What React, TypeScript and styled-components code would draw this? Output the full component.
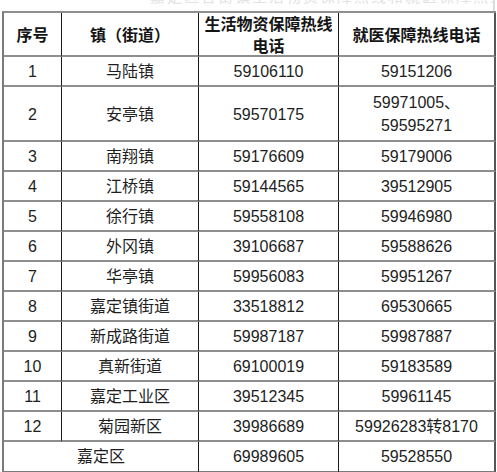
import React from 'react'
import styled, { createGlobalStyle } from 'styled-components'

const GlobalStyle = createGlobalStyle`
  html, body {
    margin: 0;
    padding: 0;
    background: #ffffff;
  }
  body {
    font-family: "Liberation Sans", "Noto Sans CJK SC", sans-serif;
    color: #1c1c1c;
  }
`

interface Row {
  no?: string
  town: string
  life: string[]
  medical: string[]
  tall?: boolean
}

const rows: Row[] = [
  { no: '1', town: '马陆镇', life: ['59106110'], medical: ['59151206'] },
  { no: '2', town: '安亭镇', life: ['59570175'], medical: ['59971005、', '59595271'], tall: true },
  { no: '3', town: '南翔镇', life: ['59176609'], medical: ['59179006'] },
  { no: '4', town: '江桥镇', life: ['59144565'], medical: ['39512905'] },
  { no: '5', town: '徐行镇', life: ['59558108'], medical: ['59946980'] },
  { no: '6', town: '外冈镇', life: ['39106687'], medical: ['59588626'] },
  { no: '7', town: '华亭镇', life: ['59956083'], medical: ['59951267'] },
  { no: '8', town: '嘉定镇街道', life: ['33518812'], medical: ['69530665'] },
  { no: '9', town: '新成路街道', life: ['59987187'], medical: ['59987887'] },
  { no: '10', town: '真新街道', life: ['69100019'], medical: ['59183589'] },
  { no: '11', town: '嘉定工业区', life: ['39512345'], medical: ['59961145'] },
  { no: '12', town: '菊园新区', life: ['39986689'], medical: ['59926283转8170'] },
]

const App: React.FC = () => {
  return (
    <>
      <GlobalStyle />
      <Page>
        <Caption>
          <CaptionText>嘉定区各街镇生活物资保障热线和就医保障热线电话</CaptionText>
        </Caption>
        <Table>
          <HeadCell>序号</HeadCell>
          <HeadCell>镇（街道）</HeadCell>
          <HeadCell>
            <Line>生活物资保障热线</Line>
            <Line>电话</Line>
          </HeadCell>
          <HeadCell last>就医保障热线电话</HeadCell>

          {rows.map((r) => (
            <React.Fragment key={r.no}>
              <Cell tall={r.tall}>{r.no}</Cell>
              <Cell tall={r.tall}>{r.town}</Cell>
              <Cell tall={r.tall}>
                {r.life.map((t) => (
                  <Line key={t}>{t}</Line>
                ))}
              </Cell>
              <Cell tall={r.tall} last>
                {r.medical.map((t) => (
                  <Line key={t}>{t}</Line>
                ))}
              </Cell>
            </React.Fragment>
          ))}

          <Cell span={2} bottom>嘉定区</Cell>
          <Cell bottom>69989605</Cell>
          <Cell bottom last>59528550</Cell>
        </Table>
      </Page>
    </>
  )
}

const Page = styled.div`
  width: 497px;
  height: 472px;
  overflow: hidden;
  background: #ffffff;
`

const Caption = styled.div`
  height: 11px;
  overflow: hidden;
  border-right: 2px solid #dcdcdc;
  box-sizing: border-box;
  width: 495px;
`

const CaptionText = styled.div`
  margin-top: -14px;
  padding-left: 150px;
  font-family: "Noto Sans CJK SC", sans-serif;
  font-size: 15px;
  line-height: 20px;
  color: #e2e2e2;
  white-space: nowrap;
  letter-spacing: 2px;
`

const Table = styled.div`
  display: grid;
  grid-template-columns: 58px 137px 140px 157px;
  grid-template-rows: 44px 30px 55px repeat(10, 30px) 31px;
  margin-left: 2px;
  width: 492px;
  border-top: 2px solid #8e8e8e;
  border-left: 2px solid #7a7a7a;
`

const CellBase = styled.div<{ last?: boolean; bottom?: boolean; span?: number }>`
  display: flex;
  flex-direction: column;
  align-items: center;
  justify-content: center;
  box-sizing: border-box;
  border-right: ${(p) => (p.last ? '2px solid #555' : '1px solid #1a1a1a')};
  border-bottom: ${(p) => (p.bottom ? '2px solid #7a7a7a' : '2px solid #8e8e8e')};
  grid-column: ${(p) => (p.span ? `span ${p.span}` : 'auto')};
  text-align: center;
`

const HeadCell = styled(CellBase)`
  font-family: "Noto Sans CJK SC", sans-serif;
  font-weight: 700;
  font-size: 16px;
  line-height: 22px;
  color: #151515;
`

const Cell = styled(CellBase)<{ tall?: boolean }>`
  font-size: 16px;
  line-height: ${(p) => (p.tall ? '23px' : '20px')};
  font-weight: 400;
  color: #1e1e1e;
  padding-top: 1px;
`

const Line = styled.span`
  display: block;
  white-space: nowrap;
`

export default App
